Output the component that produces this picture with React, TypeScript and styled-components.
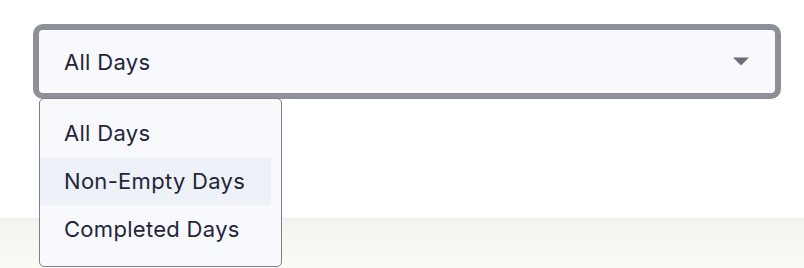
import React, { useState } from 'react';
import styled, { createGlobalStyle } from 'styled-components';

const GlobalStyle = createGlobalStyle`
  html, body {
    margin: 0;
    padding: 0;
    background: #ffffff;
    font-family: Inter, "Noto Sans", sans-serif;
  }
`;

const Page = styled.div`
  display: flex;
  flex-direction: column;
  width: 804px;
  height: 268px;
  overflow: hidden;
`;

const Top = styled.div`
  height: 218px;
  padding: 24px 23px 0 33px;
  box-sizing: border-box;
`;

const Band = styled.div`
  flex: 1;
  border-top: 1px solid #e9ecf2;
  background: linear-gradient(180deg, #f5f3ee 0%, #fbfaf5 100%);
`;

const SelectWrap = styled.div`
  position: relative;
  width: 748px;
`;

const SelectBox = styled.div`
  display: flex;
  align-items: center;
  justify-content: space-between;
  height: 75px;
  box-sizing: border-box;
  padding: 0 25px;
  border: 6px solid #8e9099;
  border-radius: 10px;
  background: #f8f9fd;
  color: #23263a;
  font-size: 22px;
  letter-spacing: 0.3px;
  cursor: pointer;
`;

const Menu = styled.ul`
  position: absolute;
  top: 74px;
  left: 6px;
  width: 243px;
  box-sizing: border-box;
  margin: 0;
  padding: 10px 10px 13px 0;
  list-style: none;
  border: 1px solid #7d808a;
  border-radius: 5px;
  background: #f8f9fd;
  z-index: 2;
`;

const Item = styled.li<{ $active?: boolean }>`
  display: flex;
  align-items: center;
  height: 48px;
  padding-left: 24px;
  color: #23263a;
  font-size: 22px;
  letter-spacing: 0.3px;
  background: ${(p) => (p.$active ? '#eef1f7' : 'transparent')};
  cursor: pointer;
`;

const options = ['All Days', 'Non-Empty Days', 'Completed Days'];

const App: React.FC = () => {
  const [value] = useState('All Days');
  const hovered = 'Non-Empty Days';

  return (
    <Page>
      <GlobalStyle />
      <Top>
        <SelectWrap>
          <SelectBox>
            <span>{value}</span>
            <svg width="18" height="9" viewBox="0 0 18 9">
              <path d="M1 0.5 L17 0.5 L9 8.5 Z" fill="#6c6f79" />
            </svg>
          </SelectBox>
          <Menu>
            {options.map((o) => (
              <Item key={o} $active={o === hovered}>
                {o}
              </Item>
            ))}
          </Menu>
        </SelectWrap>
      </Top>
      <Band />
    </Page>
  );
};

export default App;
